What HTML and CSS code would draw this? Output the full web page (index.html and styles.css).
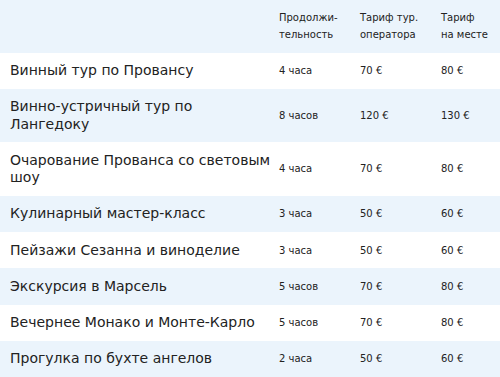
FILE: index.html
```html
<!DOCTYPE html>
<html lang="ru">
<head>
    <meta charset="UTF-8">
    <meta name="viewport" content="width=device-width, initial-scale=1.0">
    <title>Экскурсии по Провансу</title>
    <link rel="stylesheet" href="styles.css">
</head>
<body>
    <!-- Tours price table -->
    <table class="tours">
        <thead>
            <tr>
                <th class="name"></th>
                <th>Продолжи-<br>тельность</th>
                <th>Тариф тур.<br>оператора</th>
                <th>Тариф<br>на месте</th>
            </tr>
        </thead>
        <tbody>
            <tr>
                <td class="name">Винный тур по Провансу</td>
                <td>4 часа</td>
                <td>70 €</td>
                <td>80 €</td>
            </tr>
            <tr>
                <td class="name">Винно-устричный тур по Лангедоку</td>
                <td>8 часов</td>
                <td>120 €</td>
                <td>130 €</td>
            </tr>
            <tr>
                <td class="name">Очарование Прованса со световым шоу</td>
                <td>4 часа</td>
                <td>70 €</td>
                <td>80 €</td>
            </tr>
            <tr>
                <td class="name">Кулинарный мастер-класс</td>
                <td>3 часа</td>
                <td>50 €</td>
                <td>60 €</td>
            </tr>
            <tr>
                <td class="name">Пейзажи Сезанна и виноделие</td>
                <td>3 часа</td>
                <td>50 €</td>
                <td>60 €</td>
            </tr>
            <tr>
                <td class="name">Экскурсия в Марсель</td>
                <td>5 часов</td>
                <td>70 €</td>
                <td>80 €</td>
            </tr>
            <tr>
                <td class="name">Вечернее Монако и Монте-Карло</td>
                <td>5 часов</td>
                <td>70 €</td>
                <td>80 €</td>
            </tr>
            <tr>
                <td class="name">Прогулка по бухте ангелов</td>
                <td>2 часа</td>
                <td>50 €</td>
                <td>60 €</td>
            </tr>
        </tbody>
    </table>
</body>
</html>
```

FILE: styles.css
```css
* {
    margin: 0;
    padding: 0;
    box-sizing: border-box;
}

body {
    font-family: 'DejaVu Sans', sans-serif;
    color: #222;
    background: white;
}

.tours {
    width: 500px;
    border-collapse: collapse;
    table-layout: fixed;
}

.tours th,
.tours td {
    font-size: 10px;
    line-height: 17.25px;
    font-weight: normal;
    text-align: left;
    vertical-align: middle;
    padding: 9.5px 0 9.5px 7px;
    width: 81px;
}

.tours th {
    padding-top: 9px;
    padding-bottom: 9px;
}

/* first column: tour name, larger text */
.tours .name {
    width: 272px;
    font-size: 14px;
    padding-left: 10px;
}

.tours td:last-child,
.tours th:last-child {
    width: 66px;
}

/* striped rows */
.tours thead tr,
.tours tbody tr:nth-child(even) {
    background: #ebf4fc;
}
```
